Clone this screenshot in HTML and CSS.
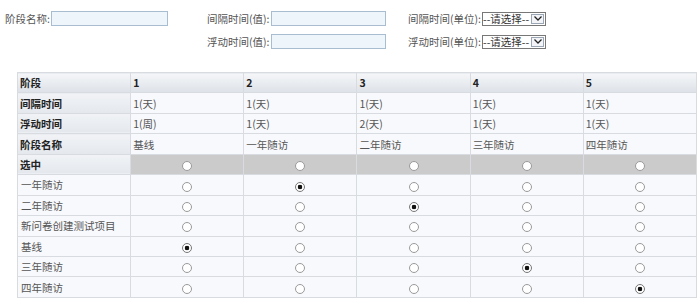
FILE: index.html
```html
<!DOCTYPE html>
<html>
<head>
    <meta charset="utf-8">
    <link rel="stylesheet" href="styles.css">
</head>
<body>

<div class="query">
    <div class="field"><label>阶段名称:</label><input type="text" class="txt"></div>
    <div class="field"><label>间隔时间(值):</label><input type="text" class="txt txt-s"></div>
    <div class="field"><label>间隔时间(单位):</label><span class="sel"><select><option>--请选择--</option></select><span class="arrow"><svg width="8" height="5" viewBox="0 0 8 5"><path d="M0.5 0.5L4 4L7.5 0.5" fill="none" stroke="#222" stroke-width="1.3"/></svg></span></span></div>
    <div class="field"></div>
    <div class="field"><label>浮动时间(值):</label><input type="text" class="txt txt-s"></div>
    <div class="field"><label>浮动时间(单位):</label><span class="sel"><select><option>--请选择--</option></select><span class="arrow"><svg width="8" height="5" viewBox="0 0 8 5"><path d="M0.5 0.5L4 4L7.5 0.5" fill="none" stroke="#222" stroke-width="1.3"/></svg></span></span></div>
</div>

<table class="stage-table">
    <tr class="head">
        <th>阶段</th><th>1</th><th>2</th><th>3</th><th>4</th><th>5</th>
    </tr>
    <tr>
        <th>间隔时间</th><td>1(天)</td><td>1(天)</td><td>1(天)</td><td>1(天)</td><td>1(天)</td>
    </tr>
    <tr>
        <th>浮动时间</th><td>1(周)</td><td>1(天)</td><td>2(天)</td><td>1(天)</td><td>1(天)</td>
    </tr>
    <tr>
        <th>阶段名称</th><td>基线</td><td>一年随访</td><td>二年随访</td><td>三年随访</td><td>四年随访</td>
    </tr>
    <tr class="pick">
        <th>选中</th>
        <td class="r"><input type="radio" name="all1"></td>
        <td class="r"><input type="radio" name="all2"></td>
        <td class="r"><input type="radio" name="all3"></td>
        <td class="r"><input type="radio" name="all4"></td>
        <td class="r"><input type="radio" name="all5"></td>
    </tr>
    <tr>
        <td class="name">一年随访</td>
        <td class="r"><input type="radio" name="s1"></td>
        <td class="r"><input type="radio" name="s2" checked></td>
        <td class="r"><input type="radio" name="s3"></td>
        <td class="r"><input type="radio" name="s4"></td>
        <td class="r"><input type="radio" name="s5"></td>
    </tr>
    <tr>
        <td class="name">二年随访</td>
        <td class="r"><input type="radio" name="s1"></td>
        <td class="r"><input type="radio" name="s2"></td>
        <td class="r"><input type="radio" name="s3" checked></td>
        <td class="r"><input type="radio" name="s4"></td>
        <td class="r"><input type="radio" name="s5"></td>
    </tr>
    <tr>
        <td class="name">新问卷创建测试项目</td>
        <td class="r"><input type="radio" name="s1"></td>
        <td class="r"><input type="radio" name="s2"></td>
        <td class="r"><input type="radio" name="s3"></td>
        <td class="r"><input type="radio" name="s4"></td>
        <td class="r"><input type="radio" name="s5"></td>
    </tr>
    <tr>
        <td class="name">基线</td>
        <td class="r"><input type="radio" name="s1" checked></td>
        <td class="r"><input type="radio" name="s2"></td>
        <td class="r"><input type="radio" name="s3"></td>
        <td class="r"><input type="radio" name="s4"></td>
        <td class="r"><input type="radio" name="s5"></td>
    </tr>
    <tr>
        <td class="name">三年随访</td>
        <td class="r"><input type="radio" name="s1"></td>
        <td class="r"><input type="radio" name="s2"></td>
        <td class="r"><input type="radio" name="s3"></td>
        <td class="r"><input type="radio" name="s4" checked></td>
        <td class="r"><input type="radio" name="s5"></td>
    </tr>
    <tr>
        <td class="name">四年随访</td>
        <td class="r"><input type="radio" name="s1"></td>
        <td class="r"><input type="radio" name="s2"></td>
        <td class="r"><input type="radio" name="s3"></td>
        <td class="r"><input type="radio" name="s4"></td>
        <td class="r"><input type="radio" name="s5" checked></td>
    </tr>
</table>

</body>
</html>
```

FILE: styles.css
```css
body {
    margin: 0;
    background-color: #fff;
    font-family: "Noto Sans CJK SC", "Liberation Sans", sans-serif;
    font-size: 10.5px;
    color: #555;
}
.query {
    display: grid;
    grid-template-columns: 202px 201px auto;
    grid-auto-rows: 23px;
    padding: 7px 0 0 5px;
}
.field {
    display: flex;
    align-items: center;
}
.field label {
    margin-right: 1px;
    white-space: nowrap;
}
.txt {
    width: 115px;
    height: 13px;
    padding: 0;
    border: 1px solid #a9bdd0;
    background-color: #eef5fb;
}
.txt-s {
    width: 113px;
}
.sel {
    display: inline-flex;
    height: 12px;
    border: 1px solid #777;
    background-color: #fff;
}
.sel select {
    -webkit-appearance: none;
    appearance: none;
    width: 48px;
    height: 12px;
    margin: 0;
    padding: 0;
    border: none;
    background: #fff;
    font-family: inherit;
    font-size: 10.5px;
    line-height: 12px;
    color: #333;
}
.arrow {
    display: flex;
    align-items: center;
    justify-content: center;
    width: 11px;
    margin: 1px 1px 1px 0;
    border: 1px solid #9aa6b4;
    background-color: #f2f4f7;
}
.stage-table {
    margin: 19px 0 0 17px;
    width: 680px;
    table-layout: fixed;
    border-collapse: collapse;
}
.stage-table th,
.stage-table td {
    height: 19.45px;
    padding: 0 2px;
    border: 1px solid #d8dce1;
    text-align: left;
    vertical-align: middle;
    line-height: 15px;
}
.stage-table th {
    color: #222;
    font-weight: bold;
    background: linear-gradient(#f1f3f6, #e4e8ed);
}
.stage-table td {
    background-color: #f8f9fc;
}
.stage-table .head th {
    background: linear-gradient(#f5f6f8, #dde2e8);
}
.stage-table .name {
    padding-left: 3px;
}
.stage-table .r {
    text-align: center;
}
.pick td {
    background-color: #cbcbcb;
}
.r input {
    -webkit-appearance: none;
    appearance: none;
    display: inline-block;
    width: 10px;
    height: 10px;
    margin: 0;
    border: 1px solid #9a9a9a;
    border-radius: 50%;
    background-color: #fff;
    vertical-align: middle;
}
.r input:checked {
    border-color: #777;
    background: radial-gradient(circle, #111 0, #111 2px, #fff 2.6px);
}
```
